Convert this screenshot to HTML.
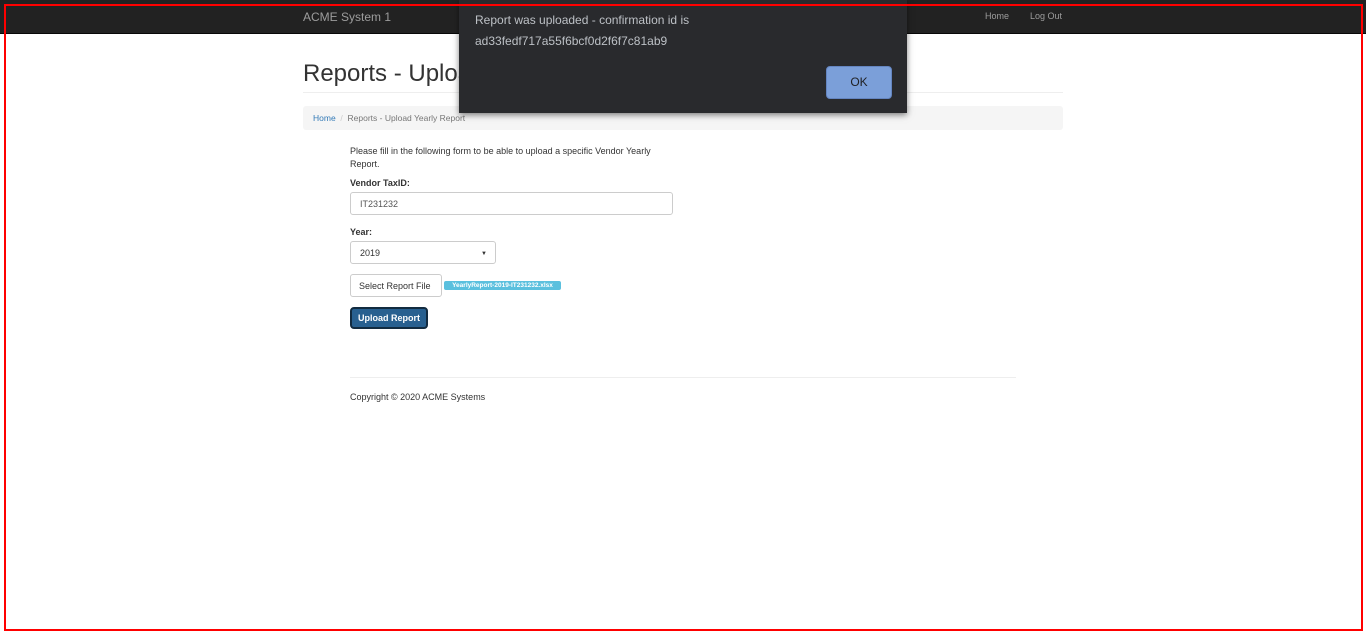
<!DOCTYPE html>
<html><head><meta charset="utf-8"><style>
*{box-sizing:border-box;margin:0;padding:0}
body{width:1366px;height:635px;background:#fff;font-family:"Liberation Sans",Arial,sans-serif;color:#333;position:relative;overflow:hidden;font-size:9px}
.nav{position:absolute;left:0;top:0;width:1366px;height:34px;background:#222;border-bottom:1px solid #080808}
.brand{position:absolute;left:303px;top:10px;color:#9d9d9d;font-size:12px}
.nl{position:absolute;top:11px;color:#9d9d9d;font-size:9px}
h1{position:absolute;left:303px;top:60px;font-size:24px;font-weight:normal;color:#333}
.hr1{position:absolute;left:303px;top:92px;width:760px;border-top:1px solid #eee}
.bc{position:absolute;left:303px;top:106px;width:760px;height:24px;background:#f5f5f5;border-radius:3px;font-size:8.5px;padding:7px 10px;color:#777}
.bc a{color:#337ab7}
.t{position:absolute;left:350px;font-size:9px}
.inp{position:absolute;left:350px;border:1px solid #ccc;border-radius:3px;background:#fff;font-size:9px;padding:0 9px;color:#555;white-space:nowrap}
.lbl{font-weight:bold}
.badge{position:absolute;left:444px;top:281px;width:117px;height:9px;background:#5bc0de;border-radius:2px;color:#fff;font-size:6.5px;font-weight:bold;line-height:9px;text-align:center;white-space:nowrap;overflow:hidden}
.up{position:absolute;left:350px;top:307px;width:78px;height:22px;background:#286090;border:2px solid #122b40;border-radius:4px;color:#fff;font-size:9px;font-weight:bold;line-height:18px;text-align:center}
.hr2{position:absolute;left:350px;top:377px;width:666px;border-top:1px solid #eee}
.dlg{position:absolute;left:459px;top:0;width:448px;height:113px;background:#292a2d;box-shadow:0 2px 6px rgba(0,0,0,.5);color:#bdc1c6;font-size:12px}
.dlg p{position:absolute;left:16px;top:10px;line-height:21px}
.ok{position:absolute;left:367px;top:66px;width:66px;height:33px;background:#7b9fd9;border:1px solid #6485c0;border-radius:4px;color:#202124;font-size:12px;text-align:center;line-height:31px}
.red{position:absolute;left:4px;top:4px;width:1359px;height:627px;border:2px solid #f00}
</style></head><body>
<div class="nav"><span class="brand">ACME System 1</span><span class="nl" style="left:985px">Home</span><span class="nl" style="left:1030px">Log Out</span></div>
<h1>Reports - Upload Yearly Report</h1>
<div class="hr1"></div>
<div class="bc"><a>Home</a> &nbsp;<span style="color:#ccc">/</span>&nbsp; Reports - Upload Yearly Report</div>
<div class="t" style="top:145px;width:330px;line-height:13px">Please fill in the following form to be able to upload a specific Vendor Yearly Report.</div>
<div class="t lbl" style="top:178px">Vendor TaxID:</div>
<div class="inp" style="top:192px;width:323px;height:23px;line-height:22px">IT231232</div>
<div class="t lbl" style="top:227px">Year:</div>
<div class="inp" style="top:241px;width:146px;height:23px;line-height:22px;color:#333">2019<span style="position:absolute;right:8px;top:1px;font-size:6px">▼</span></div>
<div class="inp" style="top:274px;width:92px;height:23px;line-height:22px;color:#333;padding:0 8px">Select Report File</div>
<div class="badge">YearlyReport-2019-IT231232.xlsx</div>
<div class="up">Upload Report</div>
<div class="hr2"></div>
<div class="t" style="top:392px">Copyright © 2020 ACME Systems</div>
<div class="dlg"><p>Report was uploaded - confirmation id is<br>ad33fedf717a55f6bcf0d2f6f7c81ab9</p><div class="ok">OK</div></div>
<div class="red"></div>
</body></html>
